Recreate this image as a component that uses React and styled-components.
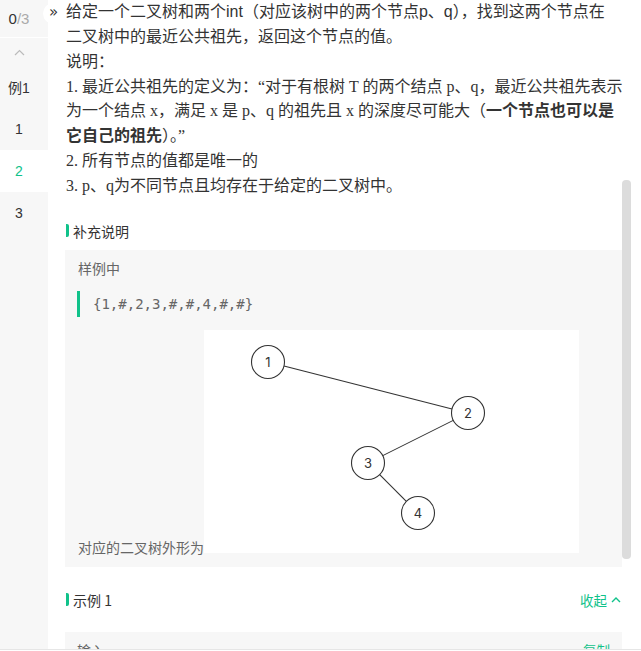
import React from "react";
import styled, { createGlobalStyle } from "styled-components";

const GREEN = "#10c28a";

const Global = createGlobalStyle`
  html, body { margin: 0; padding: 0; background: #fff; }
  body { font-family: "Noto Sans", "Noto Sans CJK SC", sans-serif; color: #333; }
  * { box-sizing: border-box; }
`;

const Frame = styled.div`
  width: 641px;
  height: 651px;
  display: flex;
  flex-direction: column;
  overflow: hidden;
  position: relative;
`;

const Body = styled.div`
  height: 649px;
  display: flex;
  overflow: hidden;
`;

const Footer = styled.div`
  height: 2px;
  border-top: 1px solid #e6e6e6;
  background: #fff;
`;

const Sidebar = styled.nav`
  width: 48px;
  flex: none;
  background: #f7f7f7;
  display: flex;
  flex-direction: column;
`;

const Counter = styled.div`
  height: 38px;
  border-bottom: 1px solid #fff;
  padding-right: 10px;
  display: flex;
  align-items: center;
  justify-content: center;
  font-family: "Liberation Sans", Arial, sans-serif;
  font-size: 15px;
  color: #333;
  span { color: #aaa; }
`;

const UpArrow = styled.div`
  height: 28px;
  padding-right: 10px;
  display: flex;
  align-items: center;
  justify-content: center;
`;

const NavItem = styled.div`
  height: 42px;
  padding-right: 10px;
  display: flex;
  align-items: center;
  justify-content: center;
  font-family: "Liberation Sans", "Noto Sans CJK SC", sans-serif;
  font-size: 14px;
  color: ${(p) => (p.$active ? GREEN : "#333")};
  background: ${(p) => (p.$active ? "#fff" : "transparent")};
`;

const Main = styled.main`
  flex: 1;
  min-width: 0;
  position: relative;
  padding: 0 19px 0 17px;
`;

const Toggle = styled.button`
  position: absolute;
  left: -5px;
  top: 3px;
  width: 21px;
  height: 21px;
  border-radius: 50%;
  border: none;
  background: #fff;
  padding: 0 0 3px 0;
  font-family: "DejaVu Sans", sans-serif;
  font-size: 15px;
  line-height: 18px;
  color: #333;
  display: flex;
  align-items: center;
  justify-content: center;
  z-index: 2;
`;

const Thumb = styled.div`
  position: absolute;
  right: 10px;
  top: 180px;
  width: 9px;
  height: 379px;
  border-radius: 4px;
  background: #dcdcdc;
`;

const Desc = styled.div`
  font-size: 16px;
  color: #333;
  padding-left: 1px;
`;

const Line = styled.div`
  height: 24.85px;
  line-height: 24.85px;
  white-space: nowrap;
  font-family: ${(p) =>
    p.$serif
      ? `"Liberation Serif", "Times New Roman", "Noto Sans CJK SC", serif`
      : `"Liberation Sans", Arial, "Noto Sans CJK SC", sans-serif`};
  b { font-weight: 700; }
`;

const SectionHead = styled.div`
  height: 24px;
  margin: ${(p) => p.$margin};
  display: flex;
  align-items: center;
  justify-content: space-between;
`;

const HeadTitle = styled.div`
  display: flex;
  align-items: center;
  font-family: "Noto Sans CJK SC", sans-serif;
  font-size: 14px;
  color: #333;
  padding-left: 1px;
  &::before {
    content: "";
    width: 3px;
    height: 13px;
    border-radius: 0 2px 2px 0;
    background: ${GREEN};
    margin-right: 4px;
  }
`;

const Fold = styled.div`
  display: flex;
  align-items: center;
  gap: 4px;
  font-family: "Noto Sans CJK SC", sans-serif;
  font-size: 13.5px;
  color: ${GREEN};
  padding-right: 1px;
`;

const GreyBox = styled.div`
  background: #f7f7f7;
  padding: ${(p) => p.$pad};
`;

const Label = styled.div`
  font-family: "Noto Sans CJK SC", sans-serif;
  font-size: 14px;
  line-height: 20px;
  color: #666;
  padding-left: 1px;
`;

const Code = styled.pre`
  margin: 13px 0 13px;
  border-left: 3px solid ${GREEN};
  padding-left: 13px;
  height: 26px;
  line-height: 26px;
  font-family: "DejaVu Sans Mono", monospace;
  font-size: 14px;
  color: #666;
`;

const Figure = styled.p`
  margin: 0;
  font-family: "Noto Sans CJK SC", sans-serif;
  font-size: 14px;
  line-height: 20px;
  color: #666;
  padding-left: 1px;
  svg { vertical-align: baseline; background: #fff; }
`;

const Row = styled.div`
  display: flex;
  justify-content: space-between;
  font-family: "Noto Sans CJK SC", sans-serif;
  font-size: 14px;
  line-height: 20px;
  color: #666;
  span:last-child { color: ${GREEN}; font-size: 13.5px; }
`;

const nodes = [
  { id: 1, x: 64, y: 32 },
  { id: 2, x: 264, y: 83 },
  { id: 3, x: 164, y: 133 },
  { id: 4, x: 214, y: 183 },
];
const edges = [
  [0, 1],
  [1, 2],
  [2, 3],
];

function Tree() {
  const r = 16.5;
  return (
    <svg width="375" height="223" viewBox="0 0 375 223">
      {edges.map(([a, b], i) => {
        const A = nodes[a];
        const B = nodes[b];
        const dx = B.x - A.x;
        const dy = B.y - A.y;
        const d = Math.hypot(dx, dy);
        return (
          <line
            key={i}
            x1={A.x + (dx / d) * r}
            y1={A.y + (dy / d) * r}
            x2={B.x - (dx / d) * r}
            y2={B.y - (dy / d) * r}
            stroke="#333"
            strokeWidth="1.1"
          />
        );
      })}
      {nodes.map((n) => (
        <g key={n.id}>
          <circle cx={n.x} cy={n.y} r={r} fill="#fff" stroke="#333" strokeWidth="1.1" />
          <text
            x={n.x}
            y={n.y + 5}
            textAnchor="middle"
            fontFamily="Inter, 'Liberation Sans', sans-serif"
            fontSize="13"
            fill="#333"
          >
            {n.id}
          </text>
        </g>
      ))}
    </svg>
  );
}

export default function App() {
  return (
    <>
      <Global />
      <Frame>
        <Body>
          <Sidebar>
            <Counter>
              0<span>/3</span>
            </Counter>
            <UpArrow>
              <svg width="11" height="7" viewBox="0 0 11 7">
                <path d="M1 6 L5.5 1.5 L10 6" fill="none" stroke="#bbb" strokeWidth="1.2" />
              </svg>
            </UpArrow>
            <NavItem>例1</NavItem>
            <NavItem>1</NavItem>
            <NavItem $active>2</NavItem>
            <NavItem>3</NavItem>
          </Sidebar>
          <Main>
            <Toggle>»</Toggle>
            <Thumb />
            <Desc>
              <Line>给定一个二叉树和两个int（对应该树中的两个节点p、q），找到这两个节点在</Line>
              <Line>二叉树中的最近公共祖先，返回这个节点的值。</Line>
              <Line $serif>说明：</Line>
              <Line $serif>1. 最近公共祖先的定义为：“对于有根树 T 的两个结点 p、q，最近公共祖先表示</Line>
              <Line $serif>
                为一个结点 x，满足 x 是 p、q 的祖先且 x 的深度尽可能大（<b>一个节点也可以是</b>
              </Line>
              <Line $serif>
                <b>它自己的祖先</b>）。”
              </Line>
              <Line $serif>2. 所有节点的值都是唯一的</Line>
              <Line $serif>3. p、q为不同节点且均存在于给定的二叉树中。</Line>
            </Desc>
            <SectionHead $margin="20px 0 7px">
              <HeadTitle>补充说明</HeadTitle>
            </SectionHead>
            <GreyBox $pad="8px 12px 10px">
              <Label>样例中</Label>
              <Code>{"{1,#,2,3,#,#,4,#,#}"}</Code>
              <Figure>
                对应的二叉树外形为
                <Tree />
              </Figure>
            </GreyBox>
            <SectionHead $margin="21px 0 20px">
              <HeadTitle>示例 1</HeadTitle>
              <Fold>
                收起
                <svg width="10" height="7" viewBox="0 0 10 7">
                  <path d="M1 6 L5 2 L9 6" fill="none" stroke={GREEN} strokeWidth="1.4" />
                </svg>
              </Fold>
            </SectionHead>
            <GreyBox $pad="8px 12px">
              <Row>
                <span>输入</span>
                <span>复制</span>
              </Row>
            </GreyBox>
          </Main>
        </Body>
        <Footer />
      </Frame>
    </>
  );
}
